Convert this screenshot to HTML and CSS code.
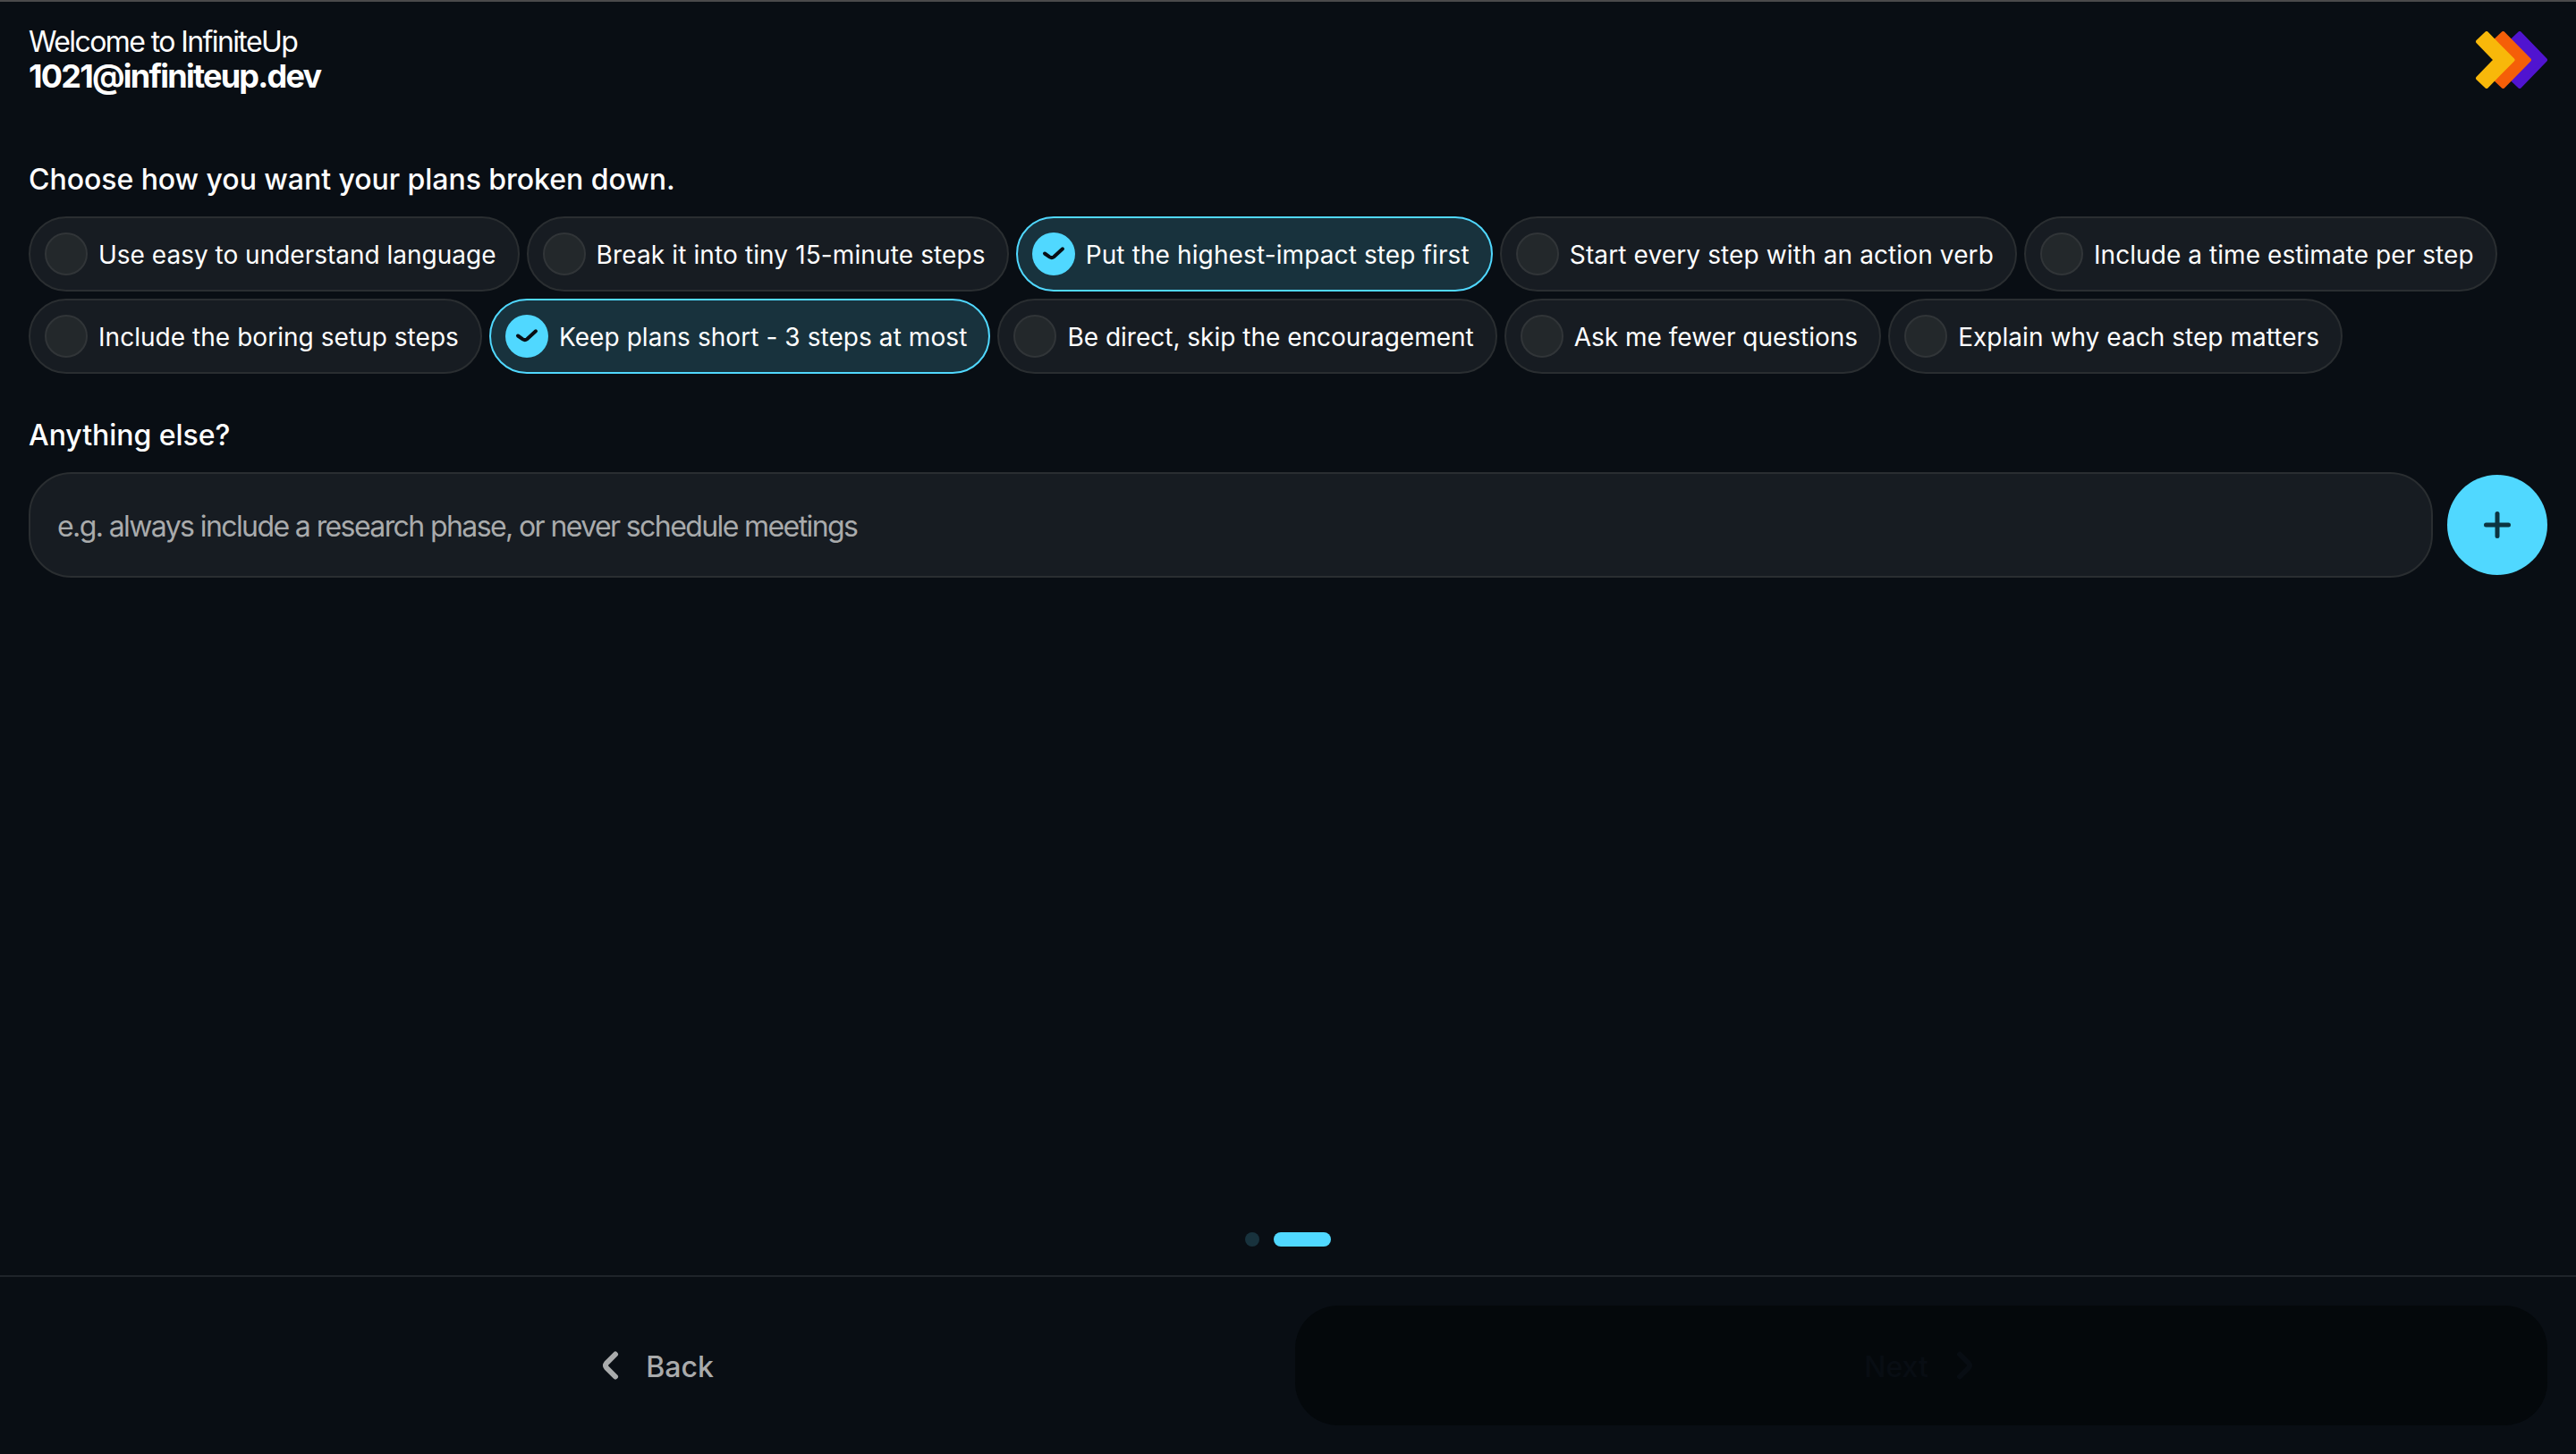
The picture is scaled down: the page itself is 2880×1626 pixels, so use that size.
FILE: index.html
```html
<!DOCTYPE html>
<html lang="en">
<head>
  <meta charset="UTF-8">
  <title>InfiniteUp</title>
  <link rel="stylesheet" href="styles.css">
</head>
<body>
  <header class="header">
    <div>
      <div class="welcome">Welcome to InfiniteUp</div>
      <div class="email">1021@infiniteup.dev</div>
    </div>
    <svg class="logo" viewBox="0 0 80 64">
      <path class="logo-purple" d="M49 2 L39 11.5 L58.8 32 L39 52.5 L49 62 L78 32 Z"/>
      <path class="logo-orange" d="M30.5 2 L20.5 11.5 L40.3 32 L20.5 52.5 L30.5 62 L60 32 Z"/>
      <path class="logo-yellow" d="M12 2 L2 11.5 L21.8 32 L2 52.5 L12 62 L41.5 32 Z"/>
    </svg>
  </header>

  <main class="content">
    <h2 class="title">Choose how you want your plans broken down.</h2>
    <div id="chips" class="chips">
      <button class="chip"><span class="check"></span><span class="label">Use easy to understand language</span></button>
      <button class="chip"><span class="check"></span><span class="label loose">Break it into tiny 15-minute steps</span></button>
      <button class="chip selected"><span class="check"><svg viewBox="0 0 48 48"><path d="M14 23.5 L19.5 27.4 Q22 29 24.2 27.2 L34 18.3"/></svg></span><span class="label loose">Put the highest-impact step first</span></button>
      <button class="chip"><span class="check"></span><span class="label loose">Start every step with an action verb</span></button>
      <button class="chip"><span class="check"></span><span class="label semi-loose">Include a time estimate per step</span></button>
      <button class="chip"><span class="check"></span><span class="label slight">Include the boring setup steps</span></button>
      <button class="chip selected"><span class="check"><svg viewBox="0 0 48 48"><path d="M14 23.5 L19.5 27.4 Q22 29 24.2 27.2 L34 18.3"/></svg></span><span class="label semi-loose">Keep plans short - 3 steps at most</span></button>
      <button class="chip"><span class="check"></span><span class="label">Be direct, skip the encouragement</span></button>
      <button class="chip"><span class="check"></span><span class="label">Ask me fewer questions</span></button>
      <button class="chip"><span class="check"></span><span class="label slight">Explain why each step matters</span></button>
    </div>

    <h2 class="title">Anything else?</h2>
    <div class="extra">
      <input class="extra-input" type="text" placeholder="e.g. always include a research phase, or never schedule meetings">
      <button class="add" aria-label="Add">
        <svg viewBox="0 0 32 32"><path d="M16 3.5 V28.5 M3.5 16 H28.5"/></svg>
      </button>
    </div>
  </main>

  <!-- Step indicator -->
  <div class="steps">
    <span class="dot"></span>
    <span class="dot active"></span>
  </div>

  <footer class="footer">
    <button class="nav back"><svg viewBox="0 0 40 40"><path d="M22 7.5 L12 17.5 Q10 20 12 22.5 L22 32.5"/></svg><span class="label">Back</span></button>
    <button class="nav next" disabled><span class="label">Next</span><svg viewBox="0 0 40 40"><path d="M19 7.5 L29 17.5 Q31 20 29 22.5 L19 32.5"/></svg></button>
  </footer>
</body>
</html>
```

FILE: styles.css
```css
* {
  box-sizing: border-box;
}
body {
  margin: 0;
  height: 1626px;
  display: flex;
  flex-direction: column;
  border-top: 2px solid #4a4a4b;
  background-color: #090e14;
  color: #fff;
  font-family: Inter, sans-serif;
}
button, input {
  font-family: inherit;
  color: inherit;
}
.header {
  display: flex;
  justify-content: space-between;
  padding: 26px 32px 0;
  height: 168px;
}
.welcome {
  font-size: 32px;
  line-height: 38px;
  letter-spacing: -1.6px;
}
.email {
  font-size: 36px;
  font-weight: 700;
  line-height: 38px;
  letter-spacing: -1.76px;
}
.logo {
  width: 80px;
  height: 64px;
  margin-top: 7px;
}
.logo path {
  stroke-width: 4;
  stroke-linejoin: round;
}
.logo-purple {
  fill: #5014d0;
  stroke: #5014d0;
}
.logo-orange {
  fill: #f55f08;
  stroke: #f55f08;
}
.logo-yellow {
  fill: #f8b80a;
  stroke: #f8b80a;
}
.content {
  flex: 1;
  padding: 11px 32px 0;
}
.title {
  margin: 0;
  font-size: 32px;
  font-weight: 500;
  line-height: 40px;
  letter-spacing: -0.04px;
}
.chips {
  display: flex;
  flex-wrap: wrap;
  gap: 8px;
  margin: 21px 0 49px;
}
.chip {
  display: flex;
  align-items: center;
  gap: 12px;
  height: 84px;
  padding: 0 24px 0 16px;
  border: 2px solid #2a2e31;
  border-radius: 42px;
  background-color: #171c22;
  font-size: 28px;
  white-space: nowrap;
}
.chip.selected {
  border-color: #50d8ff;
  background-color: #18323d;
}
.label {
  padding-top: 2px;
}
.label.loose {
  letter-spacing: 0.12px;
}
.label.semi-loose {
  letter-spacing: 0.07px;
}
.label.slight {
  letter-spacing: 0.04px;
}
.check {
  width: 48px;
  height: 48px;
  border: 2px solid #313538;
  border-radius: 50%;
  background-color: #23282b;
}
.check svg {
  display: block;
  fill: none;
  stroke: #090e14;
  stroke-width: 4;
  stroke-linecap: round;
}
.selected .check {
  border: none;
  background-color: #50d8ff;
}
.extra {
  display: flex;
  align-items: center;
  gap: 16px;
  margin-top: 21px;
}
.extra-input {
  flex: 1;
  height: 118px;
  padding: 2px 30px 0;
  border: 2px solid #2a2e31;
  border-radius: 48px;
  background-color: #171c22;
  font-size: 32px;
  letter-spacing: -1.6px;
}
.extra-input::placeholder {
  color: #a9abac;
}
.add {
  display: flex;
  align-items: center;
  justify-content: center;
  width: 112px;
  height: 112px;
  padding: 0;
  border: none;
  border-radius: 50%;
  background-color: #50d8ff;
}
.add svg {
  width: 32px;
  height: 32px;
  stroke: #0c3440;
  stroke-width: 5;
  stroke-linecap: round;
}
.steps {
  display: flex;
  justify-content: center;
  gap: 16px;
  margin-bottom: 32px;
}
.dot {
  width: 16px;
  height: 16px;
  border-radius: 8px;
  background-color: #18323d;
}
.dot.active {
  width: 64px;
  background-color: #50d8ff;
}
.footer {
  display: grid;
  grid-template-columns: 1fr 1fr;
  gap: 16px;
  padding: 32px;
  border-top: 2px solid #1f242a;
}
.nav {
  display: flex;
  align-items: center;
  justify-content: center;
  gap: 16px;
  height: 134px;
  border: none;
  border-radius: 48px;
  background: none;
  font-size: 32px;
  font-weight: 500;
}
.nav svg {
  width: 40px;
  height: 40px;
  fill: none;
  stroke: currentColor;
  stroke-width: 6;
  stroke-linecap: round;
}
.back {
  color: #a9abac;
}
.next {
  background-color: #04080b;
  color: #080d13;
}
```
